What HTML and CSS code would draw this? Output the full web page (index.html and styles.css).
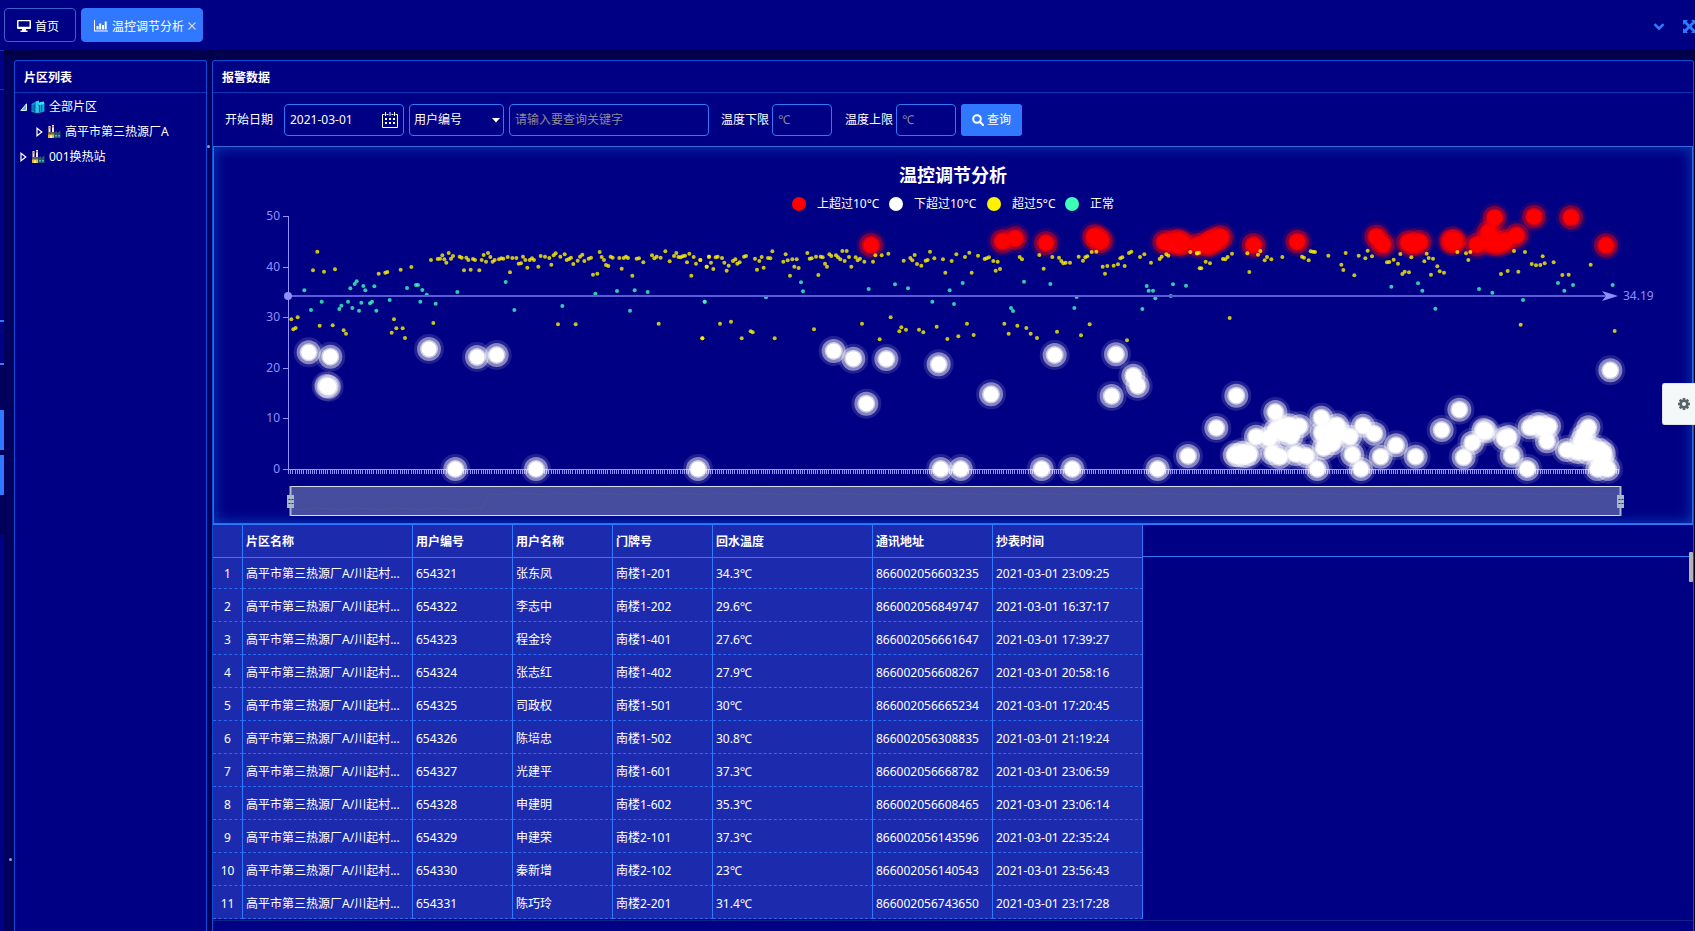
FILE: index.html
```html
<!DOCTYPE html>
<html lang="zh-CN">
<head>
<meta charset="utf-8">
<title>温控调节分析</title>
<link rel="stylesheet" href="styles.css">
</head>
<body>
<header class="topbar">
  <nav class="tabs">
    <a class="tab" href="#home">
      <svg class="tab-icon" width="14" height="12" viewBox="0 0 14 12"><path fill="#fff" fill-rule="evenodd" d="M1 0h12a1 1 0 0 1 1 1v7a1 1 0 0 1-1 1H9v1.500h1.500V12h-7v-1.500H5V9H1a1 1 0 0 1-1-1V1a1 1 0 0 1 1-1zM1.500 1.300v5.400h11V1.300z"/></svg>
      <span>首页</span>
    </a>
    <a class="tab tab-active" href="#analysis">
      <svg class="tab-icon" width="14" height="12" viewBox="0 0 14 12"><path fill="#fff" d="M0 0h1v10.500h13v1H0zM2.500 6h2v3.500h-2zM5.200 3.500h2v6h-2zM8 5h2v4.500H8zM10.700 1.500h2v8h-2z"/></svg>
      <span>温控调节分析</span>
      <button class="tab-close" type="button" aria-label="关闭"><svg width="8" height="8" viewBox="0 0 8 8"><path d="M.5.5l7 7M7.500.5l-7 7" stroke="#d6d0c8" stroke-width="1.200"/></svg></button>
    </a>
  </nav>
  <div class="tools">
    <button class="tool" type="button" aria-label="更多"><svg width="12" height="8" viewBox="0 0 12 8"><path d="M1.500 1.200L6 5.700l4.500-4.500" fill="none" stroke="#2f79ff" stroke-width="2.600"/></svg></button>
    <button class="tool" type="button" aria-label="全屏"><svg width="13" height="13" viewBox="0 0 13 13"><path d="M0 0h5L3.500 1.500 6.500 4.500l3-3L8 0h5v5l-1.500-1.500-3 3 3 3L13 8v5H8l1.500-1.500-3-3-3 3L5 13H0V8l1.500 1.500 3-3-3-3L0 5z" fill="#2f79ff"/></svg></button>
  </div>
</header>

<main class="workspace">
  <div class="rail">
    <div class="rail-head"></div>
    <div class="rail-body"></div>
    <div class="rail-box"></div>
    <div class="rail-actions"><i></i><i></i></div>
    <div class="rail-rest"></div>
  </div>
  <div class="gutter gutter-wide"><i class="grip grip-low"></i></div>

  <aside class="panel side">
    <h2 class="panel-title">片区列表</h2>
    <ul class="tree">
      <li class="node">
        <svg class="arrow-open" width="7" height="8" viewBox="0 0 7 8"><path d="M6.500.8v6.700H.8z" fill="#39c8f0" stroke="#d8f4ff"/></svg>
        <svg width="14" height="14" viewBox="0 0 14 14"><path d="M.5 4L5 1.200V13L.5 12z" fill="#0f93c8"/><path d="M5 1.200l3-.8v12.300L5 13z" fill="#27c9ee"/><path d="M7 3l5.500-1.500L13.500 4v7.500L8 13z" fill="#12a6dd"/><path d="M8.500 5v7M10.500 4.500v7M2 5v6M3.500 4.500v7" stroke="#045b9e"/><path d="M7 3l5.500-1.500L13.500 4 8.500 5z" fill="#45e2f5"/></svg>
        <span>全部片区</span>
      </li>
      <li class="node node-child">
        <svg class="arrow" width="7" height="10" viewBox="0 0 7 10"><path d="M1 1.200v7.600L5.800 5z" fill="none" stroke="#fff" stroke-width="1.200"/></svg>
        <svg width="14" height="14" viewBox="0 0 14 14"><use href="#plant"/></svg>
        <span>高平市第三热源厂A</span>
      </li>
      <li class="node">
        <svg class="arrow" width="7" height="10" viewBox="0 0 7 10"><path d="M1 1.200v7.600L5.800 5z" fill="none" stroke="#fff" stroke-width="1.200"/></svg>
        <svg width="14" height="14" viewBox="0 0 14 14"><g id="plant"><path d="M1.500 1h2v8h-2zM5 0h2v8H5z" fill="#f2e4df"/><path d="M1.500 2h2v1.500h-2zM5 1h2v1.500H5z" fill="#d97a6e"/><path d="M1 8h6v5H1z" fill="#e8bb3c"/><path d="M1 7h6v2.500H1z" fill="#6c6448"/><path d="M7 7.500L10 6v2l3.500-2.500V13H7z" fill="#2b5468"/><path d="M8 10h2v1.500H8zM11 10h2v1.500h-2z" fill="#3fb5d8"/><path d="M3 10.500h2V13H3z" fill="#fff1a0"/></g></svg>
        <span>001换热站</span>
      </li>
    </ul>
  </aside>

  <div class="gutter"><i class="grip grip-high"></i></div>

  <section class="panel content">
    <h2 class="panel-title">报警数据</h2>
    <form class="filters">
      <label class="label-date" for="start">开始日期</label>
      <span class="date-field">
        <input id="start" class="field" type="text" value="2021-03-01">
        <svg width="16" height="16" viewBox="0 0 16 16"><path d="M4.500 2.500h2M9.500 2.500h2M2.500 2.500h-2v13h15v-13h-2M3.500 0v4M8 0v4M12.500 0v4" fill="none" stroke="#fff"/><path d="M3 6h2v2H3zM7 6h2v2H7zM11 6h2v2h-2zM3 10h2v2H3zM7 10h2v2H7zM11 10h2v2h-2z" fill="#fff"/></svg>
      </span>
      <span class="select-field">
        <select class="field" aria-label="查询类型"><option>用户编号</option></select>
        <svg width="8" height="5" viewBox="0 0 8 5"><path d="M0 0h8L4 4.500z" fill="#fff"/></svg>
      </span>
      <input class="field keyword" type="text" placeholder="请输入要查询关键字" aria-label="关键字">
      <label class="label-temp" for="low">温度下限</label>
      <input id="low" class="field degree" type="text" placeholder="℃">
      <label class="label-temp" for="high">温度上限</label>
      <input id="high" class="field degree" type="text" placeholder="℃">
      <button class="query" type="button">
        <svg width="12" height="12" viewBox="0 0 12 12"><circle cx="5" cy="5" r="3.800" fill="none" stroke="#fff" stroke-width="2"/><path d="M7.800 7.800l3.200 3.200" stroke="#fff" stroke-width="2.200" stroke-linecap="round"/></svg>
        查询
      </button>
    </form>

    <div class="chart">
      <svg id="plot" class="plot" viewBox="0 0 1478 376" role="img" aria-label="温控调节分析">
        <text class="chart-title" x="739" y="35">温控调节分析</text>
        <g class="legend">
          <circle cx="585" cy="57" r="7" fill="#ff0000"/><text x="603" y="61">上超过10°C</text>
          <circle cx="682" cy="57" r="7" fill="#ffffff"/><text x="700" y="61">下超过10°C</text>
          <circle cx="780" cy="57" r="7" fill="#fff200"/><text x="798" y="61">超过5°C</text>
          <circle cx="858" cy="57" r="7" fill="#3dffb7"/><text x="876" y="61">正常</text>
        </g>
      </svg>
    </div>

    <div class="grid-area">
      <table class="grid">
        <colgroup><col class="c-no"><col class="c-area"><col class="c-user"><col class="c-user"><col class="c-user"><col class="c-temp"><col class="c-addr"><col class="c-time"></colgroup>
        <thead><tr><th></th><th>片区名称</th><th>用户编号</th><th>用户名称</th><th>门牌号</th><th>回水温度</th><th>通讯地址</th><th>抄表时间</th></tr></thead>
        <tbody>
          <tr><td>1</td><td>高平市第三热源厂A/川起村...</td><td>654321</td><td>张东凤</td><td>南楼1-201</td><td>34.3℃</td><td>866002056603235</td><td>2021-03-01 23:09:25</td></tr>
          <tr><td>2</td><td>高平市第三热源厂A/川起村...</td><td>654322</td><td>李志中</td><td>南楼1-202</td><td>29.6℃</td><td>866002056849747</td><td>2021-03-01 16:37:17</td></tr>
          <tr><td>3</td><td>高平市第三热源厂A/川起村...</td><td>654323</td><td>程金玲</td><td>南楼1-401</td><td>27.6℃</td><td>866002056661647</td><td>2021-03-01 17:39:27</td></tr>
          <tr><td>4</td><td>高平市第三热源厂A/川起村...</td><td>654324</td><td>张志红</td><td>南楼1-402</td><td>27.9℃</td><td>866002056608267</td><td>2021-03-01 20:58:16</td></tr>
          <tr><td>5</td><td>高平市第三热源厂A/川起村...</td><td>654325</td><td>司政权</td><td>南楼1-501</td><td>30℃</td><td>866002056665234</td><td>2021-03-01 17:20:45</td></tr>
          <tr><td>6</td><td>高平市第三热源厂A/川起村...</td><td>654326</td><td>陈培忠</td><td>南楼1-502</td><td>30.8℃</td><td>866002056308835</td><td>2021-03-01 21:19:24</td></tr>
          <tr><td>7</td><td>高平市第三热源厂A/川起村...</td><td>654327</td><td>光建平</td><td>南楼1-601</td><td>37.3℃</td><td>866002056668782</td><td>2021-03-01 23:06:59</td></tr>
          <tr><td>8</td><td>高平市第三热源厂A/川起村...</td><td>654328</td><td>申建明</td><td>南楼1-602</td><td>35.3℃</td><td>866002056608465</td><td>2021-03-01 23:06:14</td></tr>
          <tr><td>9</td><td>高平市第三热源厂A/川起村...</td><td>654329</td><td>申建荣</td><td>南楼2-101</td><td>37.3℃</td><td>866002056143596</td><td>2021-03-01 22:35:24</td></tr>
          <tr><td>10</td><td>高平市第三热源厂A/川起村...</td><td>654330</td><td>秦新增</td><td>南楼2-102</td><td>23℃</td><td>866002056140543</td><td>2021-03-01 23:56:43</td></tr>
          <tr><td>11</td><td>高平市第三热源厂A/川起村...</td><td>654331</td><td>陈巧玲</td><td>南楼2-201</td><td>31.4℃</td><td>866002056743650</td><td>2021-03-01 23:17:28</td></tr>
        </tbody>
      </table>
      <div class="grid-blank"><i class="scroll-thumb"></i></div>
    </div>
  </section>
  <div class="edge"></div>
</main>

<button class="settings" type="button" aria-label="设置">
  <svg width="14" height="14" viewBox="-7 -7 14 14"><g fill="#56646c"><path id="tooth" d="M-1.300-6h2.600v12h-2.600z"/><use href="#tooth" transform="rotate(45)"/><use href="#tooth" transform="rotate(90)"/><use href="#tooth" transform="rotate(135)"/><circle r="4.600"/></g><circle r="2" fill="#f5f8f8"/></svg>
</button>
<script src="chart.js"></script>
</body>
</html>
```
FILE: styles.css
```css
* { box-sizing: border-box; }

body {
  margin: 0;
  height: 100vh;
  overflow: hidden;
  display: flex;
  flex-direction: column;
  background: #000084;
  color: #fff;
  font: 12px/20px "Noto Sans", "Noto Sans CJK SC", sans-serif;
}

button, input, select { font: inherit; color: inherit; }
button { cursor: pointer; }
svg { display: block; flex: none; }

.topbar {
  flex: none;
  height: 50px;
  padding-left: 4px;
  display: flex;
  align-items: center;
  justify-content: space-between;
  background: #000084;
}
.tabs { display: flex; gap: 5px; }
.tab {
  height: 34px;
  padding: 2px 16px 0 12px;
  display: flex;
  align-items: center;
  gap: 4px;
  border: 1px solid #3a62c8;
  border-radius: 4px;
  color: #fff;
  text-decoration: none;
}
.tab span { padding-top: 1px; }
.tab-active {
  padding: 2px 6px 0 12px;
  background: #3079ff;
  border-color: #3079ff;
}
.tab-close { padding: 0; border: 0; background: none; }
.tools { display: flex; align-items: center; gap: 18px; padding-top: 3px; margin-right: -1px; }
.tool { padding: 0; border: 0; background: none; }

.workspace { flex: 1; min-height: 0; display: flex; }

.rail { width: 4px; flex: none; display: flex; flex-direction: column; background: #00005c; }
.rail-head { height: 40px; border-top: 1px solid #1238ae; border-bottom: 1px solid #1238ae; background: #000084; }
.rail-body { height: 230px; background: #000084; }
.rail-box { height: 45px; border-top: 2px solid #3079ff; border-bottom: 2px solid #3079ff; background: #000084; }
.rail-actions { height: 170px; padding-top: 45px; display: flex; flex-direction: column; gap: 5px; }
.rail-actions i { height: 40px; background: #3079ff; }
.rail-rest { flex: 1; background: #000084; }

.gutter {
  position: relative;
  flex: none;
  width: 5px;
  background: linear-gradient(#00003a, #00005c 10px);
}
.gutter-wide { width: 10px; }
.grip { position: absolute; right: 2px; width: 3px; height: 3px; border-radius: 2px; background: #9a9ac4; }
.grip-high { top: 95px; }
.grip-low { top: 808px; }

.panel {
  margin-top: 10px;
  border: 1px solid #0a4fd6;
  border-bottom: 0;
  border-radius: 3px 3px 0 0;
  background: #000084;
  box-shadow: 0 -10px 0 #00004c;
}
.panel-title {
  margin: 0;
  height: 32px;
  padding: 0 9px;
  border-bottom: 1px solid #0a34b4;
  font-size: 12px;
  line-height: 34px;
  font-weight: 700;
}
.side { flex: none; width: 193px; }
.content { flex: 1; min-width: 0; display: flex; flex-direction: column; }
.edge { width: 1px; background: #000030; }

.tree { margin: 0; padding: 1px 5px; list-style: none; }
.node { height: 25px; display: flex; align-items: center; gap: 4px; }
.node-child { padding-left: 16px; }

.filters { flex: none; height: 53px; padding: 0 12px; display: flex; align-items: center; }
.field {
  height: 32px;
  border: 1px solid #3079ff;
  border-radius: 4px;
  background: #000084;
  color: #fff;
  padding: 0 5px;
  outline: 0;
}
.field::placeholder { color: #8a8a98; opacity: 1; }
.label-date { width: 59px; }
.label-temp { width: 51px; }
.date-field, .select-field { position: relative; display: block; }
.date-field { width: 120px; margin-right: 5px; }
.date-field .field { width: 100%; }
.date-field svg { position: absolute; right: 6px; top: 8px; }
.select-field { width: 95px; margin-right: 5px; }
.select-field .field { width: 100%; appearance: none; padding: 0 4px; }
.select-field svg { position: absolute; right: 4px; top: 14px; }
.keyword { width: 200px; margin-right: 12px; }
.degree { width: 60px; margin-right: 13px; }
.degree + .query { margin-left: -8px; }
.query {
  width: 61px;
  height: 32px;
  padding: 0;
  display: flex;
  align-items: center;
  justify-content: center;
  gap: 3px;
  border: 0;
  border-radius: 3px;
  background: #3079ff;
}

.chart {
  flex: none;
  border: 1px solid #3a69dc;
  box-shadow: inset 0 0 14px #0640b8;
}
.plot { width: 100%; height: auto; }
.plot text { fill: #fff; font-size: 12px; }
.plot .chart-title { font-size: 18px; font-weight: 700; text-anchor: middle; }
.plot .axis-text { fill: #8f8fff; text-anchor: end; }
.plot .mark-text { fill: #8f8fff; }
.axis-line { stroke: #9494ff; shape-rendering: crispEdges; fill: none; }

.grid-area { flex: none; display: flex; border-bottom: 1px solid #0c2486; }
.grid {
  flex: none;
  width: 930px;
  margin-bottom: 1px;
  table-layout: fixed;
  border-collapse: separate;
  border-spacing: 0;
  background: #1c2bae;
}
.c-no { width: 30px; }
.c-area { width: 170px; }
.c-user { width: 100px; }
.c-temp { width: 160px; }
.c-addr { width: 120px; }
.c-time { width: 150px; }
.grid th, .grid td {
  padding: 0 0 0 3px;
  border-right: 1px solid #3079ff;
  text-align: left;
  white-space: nowrap;
  overflow: hidden;
}
.grid th {
  height: 34px;
  padding-top: 2px;
  border-top: 1px solid #3079ff;
  border-bottom: 1px solid #3079ff;
  line-height: 30px;
}
.grid td { padding-top: 4px; line-height: 28px; border-bottom: 1px dashed #2a6cf0; }
.grid tbody tr:first-child td { padding-top: 2px; }
.grid td:first-child { padding-left: 0; text-align: center; }
.grid-blank { position: relative; flex: 1; height: 33px; border-top: 1px solid #3079ff; border-bottom: 1px solid #3079ff; }
.scroll-thumb { position: absolute; right: 0; top: 27px; width: 4px; height: 30px; border-radius: 1px; background: #b4b4b4; }

.settings {
  position: fixed;
  right: 0;
  top: 383px;
  width: 33px;
  height: 42px;
  padding: 0 0 0 14px;
  border: 1px solid #dfe4e8;
  border-right: 0;
  border-radius: 3px 0 0 3px;
  background: #f5f8f8;
}
```
FILE: chart.js
```js
const NS = 'http://www.w3.org/2000/svg';
const plot = document.getElementById('plot');

function add(tag, attrs, text) {
  const node = document.createElementNS(NS, tag);
  for (const key in attrs) node.setAttribute(key, attrs[key]);
  if (text !== undefined) node.textContent = text;
  plot.appendChild(node);
  return node;
}

/* Readings are kept in three blocks; each block has its own left offset,
   and the pairs inside it are in thirds of a plot unit. */
const OFFSETS = [-4, 486, 981];
const TOP = -7;

const normal = [
  '283,451 303,510 335,485 388,507 394,497 414,485 421,445 427,504 434,432 440,424 447,512 454,488 460,438 466,451 480,490 486,485 493,439 499,512 539,480 591,444 618,435 624,435 631,485 637,450 650,464 677,491 742,456 887,426 913,510 1057,498 1156,461 1221,453 1260,512 1274,451 1313,456 1484,485',
  '14,485 198,472 303,427 309,454 506,447 585,433 624,445 697,485 749,451 762,492 788,429 933,504 939,513 972,425 1051,432 1123,504 1130,471 1327,507 1340,438 1346,452 1359,452 1366,475 1412,468 1419,433 1458,437',
  '589,440 669,430 682,452 721,506 852,447 892,458 984,480 1089,429 1108,452 1134,435 1253,435'
];
const warning = [
  '244,538 250,568 257,564 263,532 309,391 322,335 329,557 342,395 368,556 375,388 401,571 408,581 506,401 526,398 532,396 545,578 552,538 559,565 572,389 578,565 585,594 604,381 663,360 670,549 683,357 690,356 697,346 703,358 709,368 716,339 723,356 729,348 749,350 755,353 762,391 769,353 775,360 782,389 789,357 795,360 808,391 815,360 821,345 828,365 834,339 841,351 848,365 854,360 867,358 874,355 880,356 893,351 900,397 907,354 919,354 926,371 933,370 939,350 946,360 952,383 959,360 966,355 972,360 985,380 992,348 1005,350 1018,354 1024,374 1031,346 1037,340 1044,553 1051,350 1064,343 1070,360 1077,357 1083,353 1090,372 1097,553 1103,362 1110,350 1117,344 1123,363 1136,356 1143,353 1149,404 1162,401 1169,336 1175,351 1182,360 1188,375 1195,378 1202,350 1208,353 1228,354 1235,386 1241,354 1248,350 1254,354 1267,407 1280,356 1287,355 1300,367 1326,346 1333,355 1340,350 1346,551 1352,353 1366,334 1379,364 1392,348 1399,339 1405,351 1412,352 1418,349 1425,347 1431,367 1438,341 1444,407 1451,351 1458,371 1471,360 1477,595 1490,380 1497,350',
  '1,360 7,595 20,380 27,350 33,368 40,387 47,352 53,350 60,551 66,354 73,368 80,392 86,377 93,545 99,363 106,358 112,371 119,367 125,595 132,350 138,348 152,574 158,577 165,356 171,389 178,363 185,351 191,383 204,354 211,355 217,334 224,595 250,365 257,343 263,361 270,407 277,358 283,380 290,358 296,384 322,339 329,356 335,355 342,568 348,350 355,405 362,350 368,352 375,371 381,380 388,343 394,348 408,346 414,352 421,358 427,333 434,363 440,333 447,351 454,380 467,352 473,361 480,356 486,551 493,365 519,365 526,346 539,598 545,346 565,341 572,532 598,574 604,562 611,362 618,569 631,354 637,361 644,345 651,372 657,569 664,377 670,577 677,362 683,360 690,335 703,355 710,560 729,358 736,398 742,597 755,363 769,343 775,589 795,351 801,551 808,338 815,398 821,585 834,347 854,357 860,355 867,352 880,363 887,392 893,365 900,387 913,551 926,581 952,557 959,351 966,358 979,564 992,581 1011,594 1018,345 1031,386 1057,351 1071,575 1077,353 1084,363 1090,370 1097,368 1110,368 1136,350 1143,586 1149,362 1156,352 1162,349 1169,553 1175,336 1189,335 1208,380 1215,401 1222,378 1241,377 1254,373 1261,355 1267,352 1274,378 1281,601 1287,339 1294,335 1320,351 1333,343 1353,368 1379,357 1385,350 1399,343 1405,347 1471,336 1491,340 1499,385',
  '6,340 12,338 19,385 32,365 45,370 84,357 91,358 98,351 104,534 111,341 157,340 163,396 189,344 196,333 209,361 216,351 229,358 262,351 321,350 327,353 341,361 347,334 354,335 360,336 400,347 439,374 445,390 452,339 478,406 491,347 511,355 518,332 531,349 576,367 583,366 596,359 609,371 616,342 622,402 629,395 642,397 649,352 688,364 695,341 701,354 708,404 714,356 727,379 734,394 747,398 787,336 813,340 820,360 826,336 918,402 938,393 957,333 970,395 977,554 990,336 1010,372 1023,376 1036,375 1043,349 1049,370 1076,367 1102,405 1121,404 1187,374 1259,573'
];
const tooHigh = [
  '',
  '513,315 907,304 946,295 1038,309 1183,289 1203,303 1192,297 1393,306 1420,306 1433,304 1446,309 1438,312',
  '8,315 38,314 44,308 52,303 65,298 78,292 176,315 307,305 544,290 563,314 640,307 656,313 674,306 769,303 778,303 774,305 846,314 880,277 899,233 886,303 899,312 915,308 932,303 965,286 1017,230 1128,232 1233,316'
];
const tooLow = [
  '296,637 361,650 350,738 356,740 657,627 801,651 860,645 736,987 978,987 1464,987',
  '401,633 460,656 499,791 559,657 716,673 873,763 1064,645 1248,643 1235,768 1300,707 1313,738 722,987 782,987 1025,987 1117,987 1373,987 1464,948',
  '64,864 124,767 119,945 130,946 142,938 150,948 164,942 183,890 222,894 241,816 242,870 262,862 283,856 290,888 314,859 270,880 232,940 254,951 302,942 334,948 367,987 379,833 380,878 386,924 400,894 413,910 426,856 432,877 412,870 465,890 472,944 498,987 504,857 538,881 557,950 603,916 662,950 740,870 793,809 806,952 832,908 866,870 872,874 929,895 941,891 950,947 997,987 1004,862 1030,852 1043,862 1062,859 1056,904 1115,930 1148,936 1160,903 1167,886 1180,862 1176,938 1192,924 1214,930 1207,987 1220,958 1239,987 1226,940 1246,691'
];

function eachPoint(series, draw) {
  series.forEach((block, i) => {
    block.split(' ').filter(Boolean).forEach(pair => {
      const [x, y] = pair.split(',').map(Number);
      draw(OFFSETS[i] + x / 3, TOP + y / 3);
    });
  });
}

/* axes */
add('path', { class: 'axis-line', d: 'M74.5 69V323M74 322.5H1405' });
for (let i = 0; i <= 5; i++) {
  const y = Math.round(322 - i * 50.6);
  add('path', { class: 'axis-line', d: `M69 ${y + 0.5}H74` });
  add('text', { class: 'axis-text', x: 66, y: y + 4 }, i * 10);
}
let ticks = '';
for (let i = 0; i <= 608; i++) ticks += `M${Math.round(74 + i * 2.188) + 0.5} 323v4`;
add('path', { class: 'axis-line', d: ticks });

/* slider below the axis */
add('rect', { x: 76, y: 339, width: 1330, height: 30, fill: '#464d9f' });
let shadow = 'M76 362';
for (let x = 84; x <= 1406; x += 8) {
  const low = x < 274;
  shadow += `L${x} ${(low ? 361 : 346) + ((x * 7) % 5) / 2}`;
}
add('path', { d: shadow, fill: 'none', stroke: '#4d5498' });
add('path', { d: 'M76 339.5H1406M76 368.5H1406', stroke: '#d8dcec', fill: 'none' });
[76.5, 1406.5].forEach(x => {
  add('path', { d: `M${x} 339V369`, stroke: '#a7b7cc', 'stroke-width': 2 });
  add('rect', { x: x - 3.5, y: 348, width: 7, height: 13, fill: '#a7b7cc' });
  add('path', { d: `M${x - 2} 352.500h2m1 0h2M${x - 2} 356.500h2m1 0h2`, stroke: '#1d2f8c' });
});

/* readings */
function halo(color, mid) {
  return (x, y) => {
    add('circle', { cx: x, cy: y, r: 15, fill: color, opacity: 0.13 });
    add('circle', { cx: x, cy: y, r: 12, fill: color, opacity: mid });
    add('circle', { cx: x, cy: y, r: 9, fill: color, opacity: 0.6 });
    add('circle', { cx: x, cy: y, r: 7.5, fill: color });
  };
}
eachPoint(tooHigh, halo('#ff0000', 0.42));
eachPoint(tooLow, halo('#ffffff', 0.45));
eachPoint(warning, (x, y) => add('circle', { cx: x, cy: y, r: 2, fill: '#fff200', opacity: 0.8 }));
eachPoint(normal, (x, y) => add('circle', { cx: x, cy: y, r: 2, fill: '#3dffb7', opacity: 0.8 }));

/* average line */
add('path', { d: 'M74 149H1392', stroke: '#5c5cd8', 'stroke-width': 2 });
add('circle', { cx: 74, cy: 149, r: 4, fill: '#8f8fff' });
add('path', { d: 'M1404 149l-16 5 4-5-4-5z', fill: '#8f8fff' });
add('text', { class: 'mark-text', x: 1409, y: 153 }, '34.19');
```
